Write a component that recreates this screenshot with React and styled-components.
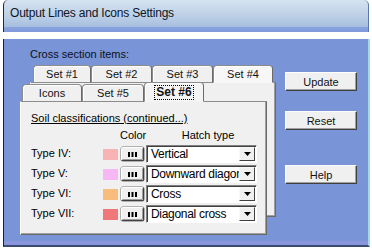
import React from "react";
import styled, { createGlobalStyle, css } from "styled-components";

const GlobalStyle = createGlobalStyle`
  html, body {
    margin: 0;
    padding: 0;
    background: #ffffff;
  }
  body {
    font-family: "Liberation Sans", Arial, sans-serif;
    font-size: 11px;
    color: #000;
  }
`;

const Page = styled.div`
  width: 372px;
  height: 251px;
  background: #ffffff;
  overflow: hidden;
  display: flex;
  flex-direction: column;
`;

const TitleBar = styled.div`
  margin-left: 3px;
  width: 366px;
  height: 32px;
  border-left: 1px solid #1e2a3a;
  border-right: 1px solid #5c7aa8;
  border-radius: 5px 5px 0 0;
  background: linear-gradient(
    180deg,
    #d6e3f1 0%,
    #bccfe6 50%,
    #a6bfdf 84%,
    #8aa4de 85%,
    #7f99da 100%
  );
  box-sizing: border-box;
`;

const TitleText = styled.div`
  padding: 6px 0 0 6px;
  font-size: 12px;
  line-height: 15px;
  color: #0b1626;
  letter-spacing: -0.2px;
`;

const Body = styled.div`
  margin-top: 7px;
  margin-left: 3px;
  width: 367px;
  height: 208px;
  box-sizing: border-box;
  background: #7a94d8;
  border-left: 1px solid #1a2230;
  border-right: 2px solid #a6d6ee;
  border-bottom: 2px solid #3a4a70;
  box-shadow: inset 0 -4px 0 #8a96dc;
  display: flex;
  padding: 8px 0 0 16px;
`;

const LeftCol = styled.div`
  width: 256px;
  display: flex;
  flex-direction: column;
`;

const Caption = styled.div`
  padding-left: 10px;
  height: 18px;
  line-height: 15px;
  color: #0b1020;
`;

const Stack = styled.div`
  display: grid;
  height: 170px;
  > * {
    grid-area: 1 / 1;
  }
`;

const Layer = styled.div`
  display: flex;
  flex-direction: column;
  ${(p) =>
    p.$back
      ? css`
          padding-left: 10px;
          padding-bottom: 18px;
        `
      : css`
          padding-top: 17px;
          padding-right: 9px;
        `}
`;

const TabRow = styled.div`
  display: flex;
  align-items: flex-end;
  height: ${(p) => p.$h}px;
  padding-left: ${(p) => p.$offset}px;
  position: relative;
  z-index: 1;
  margin-bottom: -1px;
`;

const Tab = styled.div`
  width: ${(p) => p.$w}px;
  height: ${(p) => (p.$active ? 20 : 18)}px;
  box-sizing: border-box;
  display: flex;
  align-items: center;
  justify-content: center;
  background: ${(p) => (p.$light ? "#f7f7f7" : "#f0f0f0")};
  border-top: 1px solid #8c8c8c;
  border-left: 1px solid #8c8c8c;
  border-right: 1px solid #6a6a6a;
  border-bottom: ${(p) =>
    p.$active || p.$light ? "1px solid transparent" : "1px solid #8c8c8c"};
  border-radius: 4px 4px 0 0;
  box-shadow: inset 1px 1px 0 #ffffff;
  font-size: ${(p) => (p.$active ? 12 : 11)}px;
  font-weight: ${(p) => (p.$active ? "bold" : "normal")};
  color: #111;
  ${(p) =>
    p.$active &&
    css`
      background: #f4f4f4;
    `}
`;

const Focus = styled.span`
  outline: 1px dotted #000;
  outline-offset: 0px;
  padding: 0 1px;
  line-height: 13px;
`;

const Sheet = styled.div`
  flex: 1;
  box-sizing: border-box;
  background: #f0f0f0;
  border-top: 1px solid #8c8c8c;
  border-left: 1px solid #ffffff;
  border-right: 1px solid #6a6a6a;
  border-bottom: 1px solid #6a6a6a;
  box-shadow: inset -1px -1px 0 #a0a0a0;
  padding: ${(p) => (p.$content ? "9px 0 0 10px" : "0")};
`;

const SectionTitle = styled.div`
  text-decoration: underline;
  line-height: 15px;
  height: 16px;
`;

const GridRows = styled.div`
  display: grid;
  grid-template-columns: 70px 15px 23px 112px;
  column-gap: 2px;
  row-gap: 2px;
  align-items: center;
  margin-top: 1px;
`;

const Header = styled.div`
  text-align: center;
  line-height: 14px;
  height: 15px;
  padding-left: ${(p) => p.$pl || 0}px;
`;

const Label = styled.div`
  height: 18px;
  line-height: 17px;
`;

const Swatch = styled.div`
  width: 15px;
  height: 11px;
  background: ${(p) => p.$color};
`;

const DotsButton = styled.div`
  width: 23px;
  height: 14px;
  box-sizing: border-box;
  background: #f0f0f0;
  border: 1px solid;
  border-color: #ffffff #404040 #404040 #ffffff;
  border-radius: 2px;
  box-shadow: inset -1px -1px 0 #a0a0a0, 0 0 0 0.5px #707070;
  display: flex;
  align-items: center;
  justify-content: center;
  margin-left: 1px;
`;

const Select = styled.div`
  height: 18px;
  box-sizing: border-box;
  background: #ffffff;
  border: 1px solid;
  border-color: #808080 #ffffff #ffffff #808080;
  box-shadow: inset 1px 1px 0 #404040;
  display: flex;
  align-items: stretch;
  margin-left: 1px;
`;

const SelectText = styled.div`
  flex: 1;
  overflow: hidden;
  white-space: nowrap;
  padding-left: 4px;
  padding-top: 1px;
  font-size: 12px;
  letter-spacing: -0.3px;
  line-height: 15px;
`;

const DropBtn = styled.div`
  width: 16px;
  margin: 1px 1px 1px 0;
  box-sizing: border-box;
  background: #f0f0f0;
  border: 1px solid;
  border-color: #f8f8f8 #404040 #404040 #f8f8f8;
  display: flex;
  align-items: center;
  justify-content: center;
`;

const RightCol = styled.div`
  margin-left: 9px;
  padding-top: 25px;
  display: flex;
  flex-direction: column;
`;

const Button = styled.div`
  width: 72px;
  height: 19px;
  box-sizing: border-box;
  background: #f0f0f0;
  border: 1px solid;
  border-color: #ffffff #404040 #404040 #ffffff;
  box-shadow: inset -1px -1px 0 #a0a0a0;
  display: flex;
  align-items: center;
  justify-content: center;
  margin-bottom: ${(p) => p.$gap || 0}px;
  color: #111;
`;

const Dots = () => (
  <svg width="9" height="5" viewBox="0 0 9 5">
    <rect x="0" y="0" width="2" height="5" fill="#000" />
    <rect x="3.5" y="0" width="2" height="5" fill="#000" />
    <rect x="7" y="0" width="2" height="5" fill="#000" />
  </svg>
);

const Arrow = () => (
  <svg width="7" height="4" viewBox="0 0 7 4">
    <polygon points="0,0 7,0 3.5,4" fill="#000" />
  </svg>
);

const rows = [
  { label: "Type IV:", color: "#f8b4b4", hatch: "Vertical" },
  { label: "Type V:", color: "#f6b8f4", hatch: "Downward diagonal" },
  { label: "Type VI:", color: "#f8bc7c", hatch: "Cross" },
  { label: "Type VII:", color: "#f07878", hatch: "Diagonal cross" },
];

export default function App() {
  return (
    <Page>
      <GlobalStyle />
      <TitleBar>
        <TitleText>Output Lines and Icons Settings</TitleText>
      </TitleBar>
      <Body>
        <LeftCol>
          <Caption>Cross section items:</Caption>
          <Stack>
            <Layer $back>
              <TabRow $h={18} $offset={3}>
                <Tab $w={58}>Set #1</Tab>
                <Tab $w={61}>Set #2</Tab>
                <Tab $w={61}>Set #3</Tab>
                <Tab $w={60} $light>
                  Set #4
                </Tab>
              </TabRow>
              <Sheet />
            </Layer>
            <Layer>
              <TabRow $h={20} $offset={2}>
                <Tab $w={60}>Icons</Tab>
                <Tab $w={62}>Set #5</Tab>
                <Tab $w={60} $active>
                  <Focus>Set #6</Focus>
                </Tab>
              </TabRow>
              <Sheet $content>
                <SectionTitle>Soil classifications (continued...)</SectionTitle>
                <GridRows>
                  <div />
                  <div />
                  <Header>Color</Header>
                  <Header $pl={14}>Hatch type</Header>
                  {rows.map((r) => (
                    <React.Fragment key={r.label}>
                      <Label>{r.label}</Label>
                      <Swatch $color={r.color} />
                      <DotsButton>
                        <Dots />
                      </DotsButton>
                      <Select>
                        <SelectText>{r.hatch}</SelectText>
                        <DropBtn>
                          <Arrow />
                        </DropBtn>
                      </Select>
                    </React.Fragment>
                  ))}
                </GridRows>
              </Sheet>
            </Layer>
          </Stack>
        </LeftCol>
        <RightCol>
          <Button $gap={20}>Update</Button>
          <Button $gap={35}>Reset</Button>
          <Button>Help</Button>
        </RightCol>
      </Body>
    </Page>
  );
}
